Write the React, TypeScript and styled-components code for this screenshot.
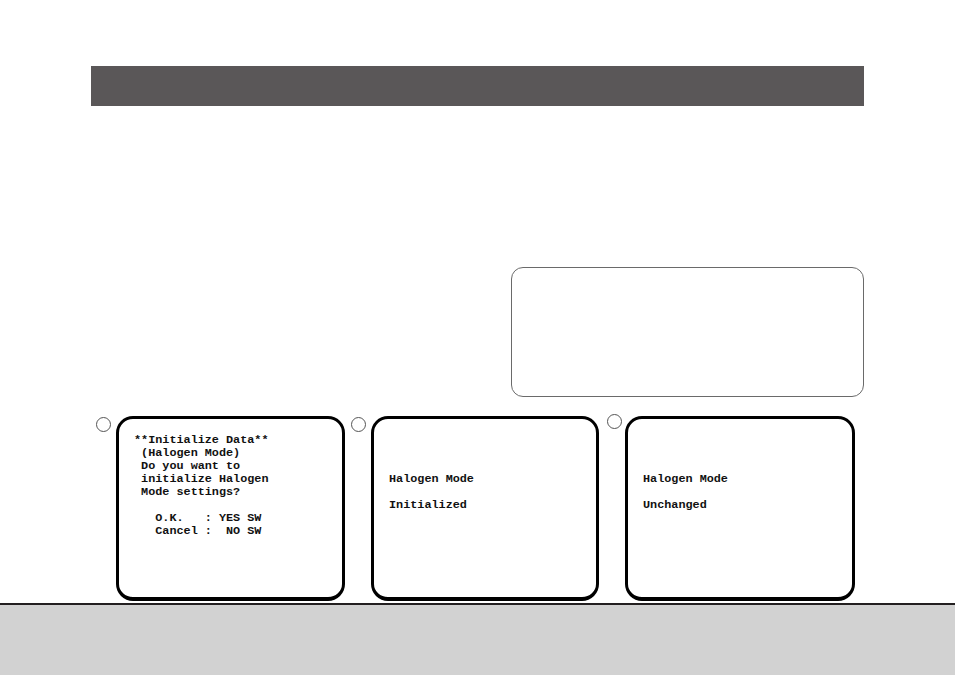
import React from "react";
import styled, { createGlobalStyle } from "styled-components";

const Global = createGlobalStyle`
  html, body { margin: 0; padding: 0; background: #ffffff; }
  body { font-family: "Liberation Sans", Arial, sans-serif; }
`;

const Page = styled.div`
  width: 955px;
  height: 675px;
  display: flex;
  flex-direction: column;
  overflow: hidden;
`;

const HeaderBar = styled.div`
  margin: 66px 0 0 91px;
  width: 773px;
  height: 40px;
  background: #5a5758;
`;

const NoteBox = styled.div`
  margin: 161px 0 0 511px;
  width: 353px;
  height: 130px;
  box-sizing: border-box;
  border: 1px solid #6a6a6a;
  border-radius: 12px;
`;

const ScreenRow = styled.div`
  display: flex;
  margin: 19px 0 0 96px;
`;

const ScreenCell = styled.div<{ $gap: number; $lead: number }>`
  display: flex;
  align-items: flex-start;
  gap: ${(p) => p.$gap}px;
  margin-left: ${(p) => p.$lead}px;
`;

const StepMark = styled.div<{ $top: number }>`
  width: 15px;
  height: 15px;
  box-sizing: border-box;
  border: 1px solid #555;
  border-radius: 50%;
  margin-top: ${(p) => p.$top}px;
`;

const Screen = styled.div<{ $w: number }>`
  width: ${(p) => p.$w}px;
  height: 185px;
  box-sizing: border-box;
  border: 3px solid #000;
  border-bottom-width: 4px;
  border-radius: 17px;
  padding: 15px 0 0 15px;
`;

const ScreenText = styled.pre`
  margin: 0;
  font-family: "Liberation Mono", "Courier New", monospace;
  font-weight: bold;
  font-size: 11.8px;
  line-height: 13px;
  color: #111;
  white-space: pre;
`;

const Footer = styled.div`
  margin-top: 2px;
  flex: 1;
  border-top: 2px solid #231f20;
  background: #d2d2d2;
`;

const screens = [
  {
    w: 229,
    gap: 5,
    top: 1,
    lead: 0,
    text: [
      "**Initialize Data**",
      " (Halogen Mode)",
      " Do you want to",
      " initialize Halogen",
      " Mode settings?",
      "",
      "   O.K.   : YES SW",
      "   Cancel :  NO SW",
    ],
  },
  {
    w: 228,
    gap: 5,
    top: 1,
    lead: 6,
    text: ["", "", "", "Halogen Mode", "", "Initialized"],
  },
  {
    w: 230,
    gap: 3,
    top: -2,
    lead: 8,
    text: ["", "", "", "Halogen Mode", "", "Unchanged"],
  },
];

export default function App() {
  return (
    <Page>
      <Global />
      <HeaderBar />
      <NoteBox />
      <ScreenRow>
        {screens.map((s, i) => (
          <ScreenCell key={i} $gap={s.gap} $lead={s.lead}>
            <StepMark $top={s.top} />
            <Screen $w={s.w}>
              <ScreenText>{s.text.join("\n")}</ScreenText>
            </Screen>
          </ScreenCell>
        ))}
      </ScreenRow>
      <Footer />
    </Page>
  );
}
